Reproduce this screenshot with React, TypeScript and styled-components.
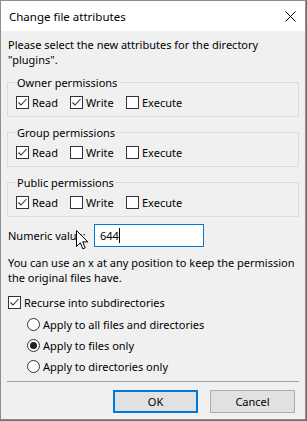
import styled, { createGlobalStyle } from "styled-components";

const GlobalStyle = createGlobalStyle`
  html, body {
    margin: 0;
    padding: 0;
    background: #6e6e6e;
  }
  body {
    font-family: "Noto Sans", "Open Sans", sans-serif;
    font-size: 11px;
    color: #000;
  }
  * {
    box-sizing: border-box;
  }
`;

const Window = styled.div`
  position: relative;
  width: 306px;
  height: 420px;
  border: 1px solid #8e8e8e;
  background: #f0f0f0;
  display: flex;
  flex-direction: column;
`;

const TitleBar = styled.div`
  height: 30px;
  flex: none;
  background: #fff;
  display: flex;
  align-items: center;
  justify-content: space-between;
  padding: 0 9px 0 8px;
`;

const Title = styled.span`
  line-height: 15px;
  font-size: 11.5px;
`;

const Body = styled.div`
  flex: 1;
  display: flex;
  flex-direction: column;
  padding: 6px 6px 0 6px;
`;

const Text = styled.p<{ $top?: number }>`
  margin: ${(p) => p.$top ?? 0}px 0 0 1px;
  line-height: 15px;
  white-space: nowrap;
`;

const Group = styled.fieldset`
  margin: 8px 0 0 0;
  padding: 5px 8px 6px 8px;
  border: 1px solid #dcdcdc;
  min-width: 0;
`;

const Legend = styled.legend`
  padding: 0 1px;
  line-height: 15px;
`;

const CheckRow = styled.div`
  display: grid;
  grid-template-columns: 54px 56px auto;
`;

const Option = styled.label<{ $indent?: number; $top?: number }>`
  display: flex;
  align-items: center;
  gap: 3px;
  line-height: 15px;
  height: 15px;
  white-space: nowrap;
  margin-left: ${(p) => p.$indent ?? 0}px;
  margin-top: ${(p) => p.$top ?? 0}px;
`;

const Box = styled.span`
  width: 13px;
  height: 13px;
  flex: none;
  border: 1px solid #333;
  background: #fff;
  display: flex;
  align-items: center;
  justify-content: center;
`;

const Circle = styled.span`
  width: 13px;
  height: 13px;
  flex: none;
  border: 1px solid #333;
  border-radius: 50%;
  background: #fff;
  display: flex;
  align-items: center;
  justify-content: center;
`;

const Dot = styled.span`
  width: 7px;
  height: 7px;
  border-radius: 50%;
  background: #222;
`;

const ValueRow = styled.div`
  display: flex;
  align-items: center;
  margin-top: 7px;
  padding-left: 1px;
`;

const ValueLabel = styled.span`
  width: 86px;
  line-height: 15px;
`;

const TextBox = styled.div`
  width: 110px;
  height: 23px;
  border: 1px solid #0078d7;
  background: #fff;
  display: flex;
  align-items: center;
  padding-left: 5px;
`;

const Caret = styled.span`
  width: 1px;
  height: 15px;
  background: #000;
`;

const Separator = styled.div`
  height: 1px;
  background: #a0a0a0;
  margin-top: 7px;
`;

const Buttons = styled.div`
  display: flex;
  justify-content: flex-end;
  gap: 12px;
  margin-top: 8px;
  padding-right: 4px;
`;

const Button = styled.button<{ $primary?: boolean }>`
  width: 85px;
  height: 23px;
  font: inherit;
  color: #000;
  background: #e1e1e1;
  border: ${(p) => (p.$primary ? "2px solid #0078d7" : "1px solid #adadad")};
  padding: 0;
`;

const Cursor = styled.svg`
  position: absolute;
  left: 75px;
  top: 229px;
`;

function Check() {
  return (
    <svg width="11" height="11" viewBox="0 0 11 11">
      <polyline points="1.5,5.5 4,8 9.5,2" fill="none" stroke="#333" strokeWidth="1.1" />
    </svg>
  );
}

function CheckBox({ checked, label }: { checked?: boolean; label: string }) {
  return (
    <Option>
      <Box>{checked && <Check />}</Box>
      {label}
    </Option>
  );
}

function PermissionGroup({ title, values }: { title: string; values: boolean[] }) {
  const names = ["Read", "Write", "Execute"];
  return (
    <Group>
      <Legend>{title}</Legend>
      <CheckRow>
        {names.map((n, i) => (
          <CheckBox key={n} label={n} checked={values[i]} />
        ))}
      </CheckRow>
    </Group>
  );
}

export default function App() {
  const radios = [
    { label: "Apply to all files and directories", on: false },
    { label: "Apply to files only", on: true },
    { label: "Apply to directories only", on: false },
  ];

  return (
    <>
      <GlobalStyle />
      <Window>
        <TitleBar>
          <Title>Change file attributes</Title>
          <svg width="11" height="11" viewBox="0 0 11 11">
            <path d="M0.5 0.5 L10.5 10.5 M10.5 0.5 L0.5 10.5" stroke="#000" strokeWidth="1" />
          </svg>
        </TitleBar>
        <Body>
          <Text>
            Please select the new attributes for the directory
            <br />
            "plugins".
          </Text>
          <PermissionGroup title="Owner permissions" values={[true, true, false]} />
          <PermissionGroup title="Group permissions" values={[true, false, false]} />
          <PermissionGroup title="Public permissions" values={[true, false, false]} />
          <ValueRow>
            <ValueLabel>Numeric value:</ValueLabel>
            <TextBox>
              644
              <Caret />
            </TextBox>
          </ValueRow>
          <Text $top={8}>
            You can use an x at any position to keep the permission
            <br />
            the original files have.
          </Text>
          <Option $top={10} $indent={1}>
            <Box>
              <Check />
            </Box>
            Recurse into subdirectories
          </Option>
          {radios.map((r, i) => (
            <Option key={r.label} $indent={20} $top={i === 0 ? 7 : 6}>
              <Circle>{r.on && <Dot />}</Circle>
              {r.label}
            </Option>
          ))}
          <Separator />
          <Buttons>
            <Button $primary>OK</Button>
            <Button>Cancel</Button>
          </Buttons>
        </Body>
        <Cursor width="13" height="21" viewBox="0 0 13 21">
          <path
            d="M0.5 0.5 L0.5 16.5 L4.3 12.8 L6.8 18.8 L9.2 17.8 L6.7 11.9 L11.8 11.9 Z"
            fill="#fff"
            stroke="#000"
            strokeWidth="1"
          />
        </Cursor>
      </Window>
    </>
  );
}
